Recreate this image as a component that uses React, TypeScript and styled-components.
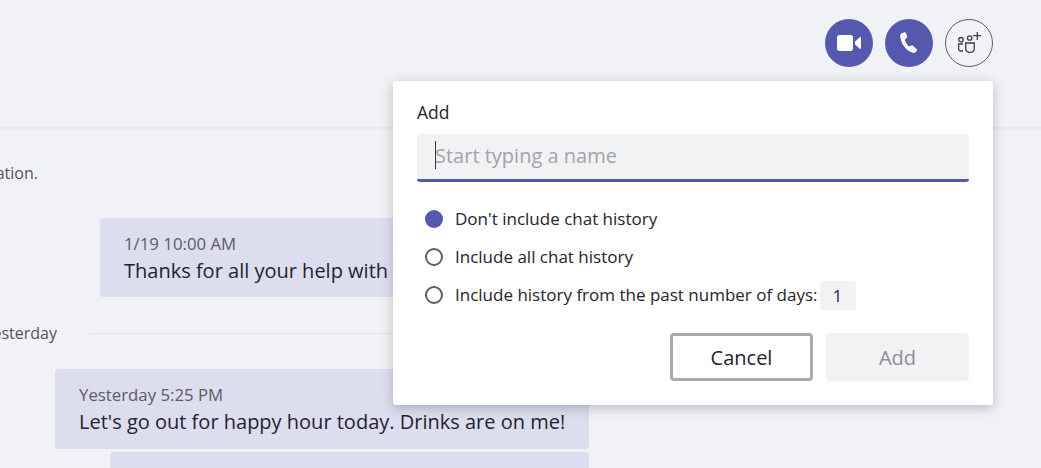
import styled, { createGlobalStyle } from 'styled-components';

const accent = '#5558af';
const ink = '#24242e';

const GlobalStyle = createGlobalStyle`
  html, body {
    margin: 0;
    padding: 0;
    background: #f1f2f5;
    font-family: "Open Sans", "Noto Sans", sans-serif;
    color: ${ink};
  }
`;

const Page = styled.div`
  position: relative;
  width: 1041px;
  height: 468px;
  overflow: hidden;
  background: #f1f2f5;
`;

const Header = styled.header`
  display: flex;
  justify-content: flex-end;
  gap: 12px;
  height: 108px;
  padding: 19px 48px 0 0;
  border-bottom: 3px solid #e8eaef;
`;

const RoundButton = styled.button<{ $filled?: boolean }>`
  display: flex;
  align-items: center;
  justify-content: center;
  width: 48px;
  height: 48px;
  padding: 0;
  border-radius: 50%;
  border: ${({ $filled }) => ($filled ? 'none' : '1px solid #5f5e68')};
  background: ${({ $filled }) => ($filled ? accent : 'transparent')};
`;

const Feed = styled.main`
  display: flex;
  flex-direction: column;
`;

const Notice = styled.div`
  display: flex;
  justify-content: flex-end;
  width: 38px;
  margin-top: 33px;
  overflow: hidden;
  white-space: nowrap;
  font-size: 16px;
  line-height: 20px;
  color: #55545c;
`;

const Bubble = styled.article<{ $left: number; $top: number; $right: number; $height: number }>`
  box-sizing: border-box;
  flex: none;
  width: ${({ $left, $right }) => $right - $left}px;
  height: ${({ $height }) => $height}px;
  margin-left: ${({ $left }) => $left}px;
  margin-top: ${({ $top }) => $top}px;
  padding: 15px 24px 0;
  border-radius: 4px;
  background: #dcddef;
  overflow: hidden;
  white-space: nowrap;
`;

const Stamp = styled.div`
  font-size: 16.8px;
  line-height: 22px;
  color: #5c5b66;
`;

const Body = styled.div`
  font-size: 20px;
  line-height: 32px;
  color: ${ink};
`;

const DayRow = styled.div`
  display: flex;
  align-items: center;
  gap: 33px;
  margin-top: 26px;
  height: 20px;
`;

const DayLabel = styled.div`
  display: flex;
  justify-content: flex-end;
  width: 57px;
  overflow: hidden;
  white-space: nowrap;
  font-size: 16px;
  color: #55545c;
`;

const DayLine = styled.div`
  width: 320px;
  height: 1px;
  background: #e2e3e8;
`;

const Popover = styled.section`
  position: absolute;
  left: 393px;
  top: 81px;
  box-sizing: border-box;
  width: 600px;
  height: 324px;
  padding: 20px 24px 24px;
  border-radius: 3px;
  background: #fff;
  box-shadow: 0 3px 12px rgba(40, 40, 60, 0.28);
`;

const FieldLabel = styled.div`
  font-size: 17.5px;
  line-height: 22px;
  color: ${ink};
`;

const NameField = styled.div`
  display: flex;
  align-items: center;
  box-sizing: border-box;
  height: 48px;
  margin-top: 11px;
  padding-left: 18px;
  padding-bottom: 3px;
  border-bottom: 3px solid ${accent};
  border-radius: 3px;
  background: #f1f2f4;
  font-size: 20px;
  color: #a2a3ab;
`;

const Caret = styled.span`
  width: 1px;
  height: 28px;
  margin-right: -1px;
  background: #33323a;
`;

const Options = styled.div`
  display: flex;
  flex-direction: column;
  gap: 18px;
  margin-top: 26px;
`;

const Option = styled.div`
  display: flex;
  align-items: center;
  height: 20px;
  padding-left: 8px;
  font-size: 17px;
  white-space: nowrap;
`;

const Radio = styled.span<{ $checked?: boolean }>`
  box-sizing: border-box;
  width: 18px;
  height: 18px;
  margin: 2px 12px 0 0;
  border-radius: 50%;
  border: ${({ $checked }) => ($checked ? 'none' : '2px solid #5f5e68')};
  background: ${({ $checked }) => ($checked ? accent : 'transparent')};
`;

const DaysBox = styled.span`
  display: flex;
  align-items: center;
  justify-content: center;
  flex: none;
  width: 36px;
  height: 29px;
  margin: 2px 0 0 2px;
  border-radius: 3px;
  background: #f1f2f4;
  font-size: 16.5px;
`;

const Actions = styled.div`
  display: flex;
  justify-content: flex-end;
  gap: 13px;
  margin-top: 29px;
`;

const ActionButton = styled.button<{ $disabled?: boolean }>`
  box-sizing: border-box;
  width: 143px;
  height: 48px;
  border-radius: 4px;
  border: ${({ $disabled }) => ($disabled ? 'none' : '3px solid #a8abb2')};
  background: ${({ $disabled }) => ($disabled ? '#f1f2f4' : '#fff')};
  color: ${({ $disabled }) => ($disabled ? '#8c8d94' : ink)};
  font-family: inherit;
  font-size: 20px;
`;

const VideoIcon = () => (
  <svg width="24" height="16" viewBox="0 0 24 16" fill="#fff">
    <rect x="0" y="0" width="16" height="16" rx="2.5" />
    <path d="M18 6.500 22.800 2.300c.5-.4 1.200-.1 1.200.6v10.200c0 .7-.7 1-1.200.6L18 9.500z" />
  </svg>
);

const PhoneIcon = () => (
  <svg width="18" height="22" viewBox="0 0 18 22" fill="#fff">
    <path d="M1.800 1.300 4.300.3c.7-.3 1.400 0 1.700.7l1.200 3.400c.2.600 0 1.200-.5 1.500L5.300 7c-.3.200-.4.500-.3.900.6 2.300 2 4.700 3.700 6.200.3.200.6.300.9.100l1.500-.8c.5-.3 1.100-.2 1.500.2l3.900 3.300c.6.500.6 1.200.2 1.800l-1.200 1.500c-.5.600-1.200.9-2 .7C6.500 19.200.7 12 .3 4 .2 2.800.8 1.800 1.800 1.300z" />
  </svg>
);

const AddPeopleIcon = () => (
  <svg width="24" height="22" viewBox="-1 0.5 24 22" fill="none" stroke="#3f3e48" strokeWidth="1.3">
    <circle cx="3" cy="8.200" r="2.200" />
    <circle cx="11.700" cy="6.500" r="2.200" />
    <path d="M5 12.500H.6v4.500c0 1.500 1 2.500 2.400 2.500h2" />
    <path d="M7.700 11.500h8.600v5.800c0 2.200-1.900 3.500-4.300 3.500S7.700 19.500 7.700 17.300z" />
    <path d="M19.300 0v8.400M15.100 4.200h8.400" />
  </svg>
);

export default function App() {
  return (
    <Page>
      <GlobalStyle />
      <Header>
        <RoundButton $filled aria-label="Video call">
          <VideoIcon />
        </RoundButton>
        <RoundButton $filled aria-label="Audio call">
          <PhoneIcon />
        </RoundButton>
        <RoundButton aria-label="Add people">
          <AddPeopleIcon />
        </RoundButton>
      </Header>
      <Feed>
        <Notice>conversation.</Notice>
        <Bubble $left={100} $top={35} $right={500} $height={79}>
          <Stamp>1/19 10:00 AM</Stamp>
          <Body>Thanks for all your help with the presentation</Body>
        </Bubble>
        <DayRow>
          <DayLabel>Yesterday</DayLabel>
          <DayLine />
        </DayRow>
        <Bubble $left={55} $top={26} $right={589} $height={80}>
          <Stamp>Yesterday 5:25 PM</Stamp>
          <Body>Let's go out for happy hour today. Drinks are on me!</Body>
        </Bubble>
        <Bubble $left={110} $top={3} $right={589} $height={80} />
      </Feed>
      <Popover>
        <FieldLabel>Add</FieldLabel>
        <NameField>
          <Caret />
          Start typing a name
        </NameField>
        <Options>
          <Option>
            <Radio $checked />
            Don't include chat history
          </Option>
          <Option>
            <Radio />
            Include all chat history
          </Option>
          <Option>
            <Radio />
            Include history from the past number of days:
            <DaysBox>1</DaysBox>
          </Option>
        </Options>
        <Actions>
          <ActionButton>Cancel</ActionButton>
          <ActionButton $disabled>Add</ActionButton>
        </Actions>
      </Popover>
    </Page>
  );
}
